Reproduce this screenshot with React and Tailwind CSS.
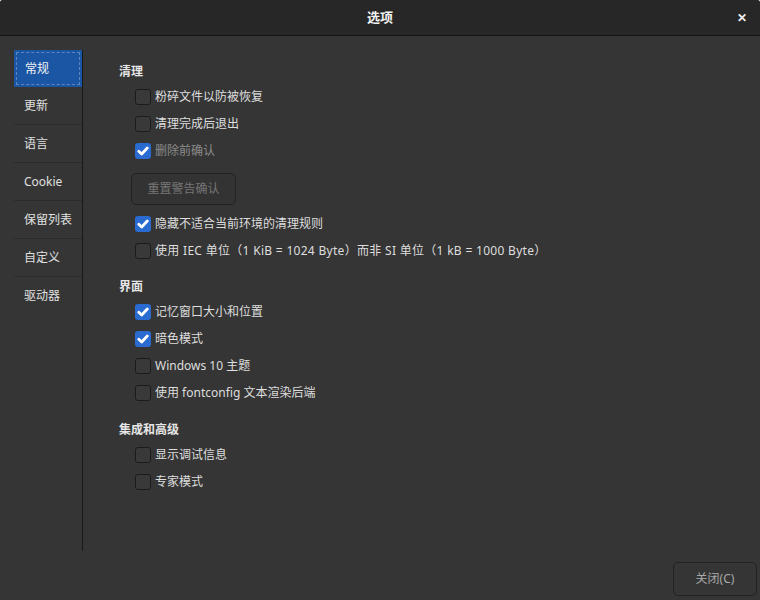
import React from "react";

const navItems = ["常规", "更新", "语言", "Cookie", "保留列表", "自定义", "驱动器"];

function Check({ checked, label, dim, className = "" }) {
  return (
    <div className="h-[27px] flex items-center pl-[16px]">
      {checked ? (
        <span className="w-[16px] h-[16px] rounded-[3px] bg-[#2a6bd1] flex items-center justify-center">
          <svg width="12" height="12" viewBox="0 0 12 12">
            <path d="M1.8 6.2 L4.7 9 L10.3 3" fill="none" stroke="#fff" strokeWidth="2.8" strokeLinecap="round" strokeLinejoin="round" />
          </svg>
        </span>
      ) : (
        <span className="w-[16px] h-[16px] rounded-[3px] bg-[#393939] border border-[#1b1b1b]" />
      )}
      <span className={`ml-[4px] text-[12px] ${dim ? "text-[#8c8c8c]" : "text-[#dedede]"} ${className}`}>{label}</span>
    </div>
  );
}

function Heading({ children, className = "" }) {
  return (
    <div className={`h-[22px] flex items-center text-[12px] font-bold text-[#e6e6e6] ${className}`}>
      {children}
    </div>
  );
}

export default function App() {
  return (
    <div
      className="w-[760px] h-[600px] flex flex-col bg-[#353535] rounded-t-[3px] overflow-hidden"
      style={{ fontFamily: '"Noto Sans", "Noto Sans CJK SC", sans-serif' }}
    >
      {/* title bar */}
      <div className="h-[36px] shrink-0 bg-[#272727] border-b border-[#141414] flex items-center relative">
        <div className="flex-1 text-center text-[13px] font-bold text-[#f2f2f2]">选项</div>
        <span className="absolute right-[13px] top-[9px] text-[12px] font-bold text-[#eeeeee]">✕</span>
      </div>

      <div className="flex-1 flex flex-col">
        <div className="flex h-[501px] mt-[14px]">
          {/* side nav */}
          <div className="ml-[14px] w-[69px] border-r border-[#191919] flex flex-col">
            {navItems.map((item, i) =>
              i === 0 ? (
                <div key={item} className="h-[37px] bg-[#1b56a5] p-[2px]">
                  <div className="h-full border border-dashed border-[#5d84bf] flex items-center pl-[8px] text-[12px] text-[#f0f0f0]">
                    {item}
                  </div>
                </div>
              ) : (
                <div
                  key={item}
                  className={`h-[38px] flex items-center pl-[10px] text-[12px] text-[#e0e0e0] ${
                    i < navItems.length - 1 ? "border-b border-[#2b2b2b]" : ""
                  }`}
                >
                  {item}
                </div>
              )
            )}
          </div>

          {/* settings */}
          <div className="flex-1 pl-[36px] pt-[11px]">
            <Heading>清理</Heading>
            <Check label="粉碎文件以防被恢复" />
            <Check label="清理完成后退出" />
            <Check checked dim label="删除前确认" />
            <div className="mt-[9px] ml-[12px] w-[105px] h-[32px] rounded-[5px] border border-[#222222] bg-[#333333] flex items-center justify-center text-[12px] text-[#767676]">
              重置警告确认
            </div>
            <div className="mt-[5px]">
              <Check checked label="隐藏不适合当前环境的清理规则" />
              <Check
                className="tracking-[0.3px]"
                label="使用 IEC 单位（1 KiB = 1024 Byte）而非 SI 单位（1 kB = 1000 Byte）"
              />
            </div>

            <Heading className="mt-[12px]">界面</Heading>
            <Check checked label="记忆窗口大小和位置" />
            <Check checked label="暗色模式" />
            <Check label="Windows 10 主题" />
            <Check label="使用 fontconfig 文本渲染后端" />

            <Heading className="mt-[13px]">集成和高级</Heading>
            <Check label="显示调试信息" />
            <Check label="专家模式" />
          </div>
        </div>

        <div className="flex justify-end pr-[3px] pt-[11px]">
          <div className="w-[84px] h-[34px] rounded-[5px] border border-[#222222] bg-[#353535] flex items-center justify-center text-[12px] text-[#a8a8a8]">
            关闭(C)
          </div>
        </div>
      </div>
    </div>
  );
}
